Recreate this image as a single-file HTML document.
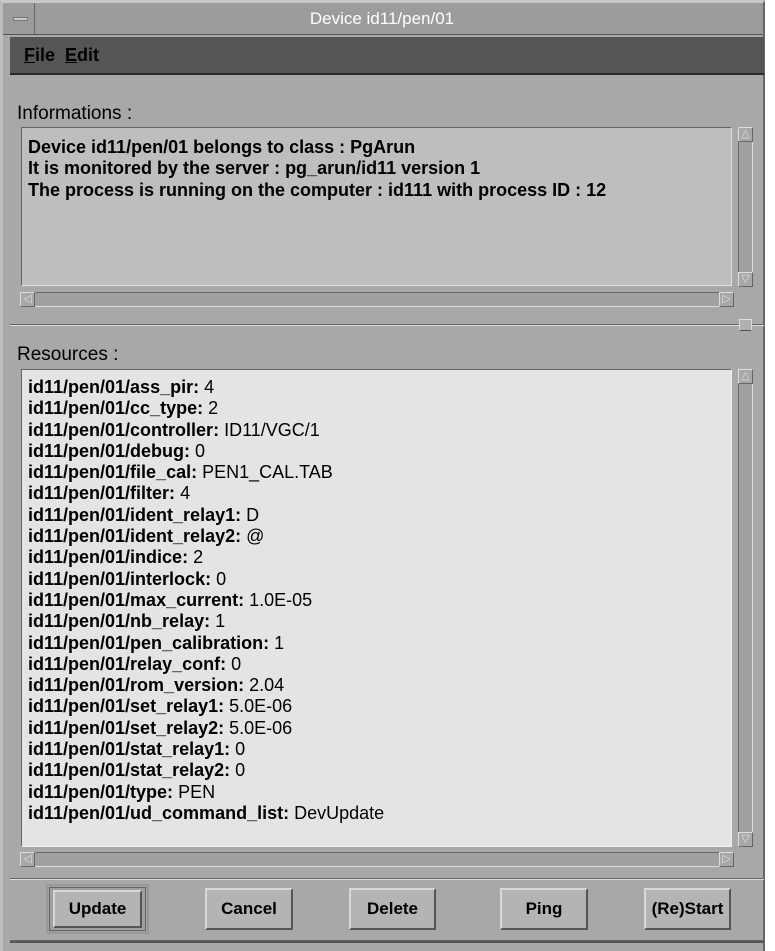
<!DOCTYPE html>
<html><head><style>
*{margin:0;padding:0;box-sizing:border-box}
body{width:775px;height:951px;background:#fff;position:relative;overflow:hidden;font-family:"Liberation Sans",sans-serif}
.a{position:absolute}
.t{font-size:18px;color:#000;white-space:pre;line-height:21.3px}
.btn{position:absolute;top:888px;height:42px;background:#b4b4b4;border-top:2px solid #d8d8d8;border-left:2px solid #d8d8d8;border-right:2px solid #555;border-bottom:2px solid #555;font-weight:bold;font-size:17px;text-align:center;line-height:38px}
.sb{background:#a0a0a0;border:1px solid #666;border-right-color:#ddd;border-bottom-color:#ddd}
.ar{position:absolute;background:#a8a8a8;border:1px solid #ddd;border-right-color:#666;border-bottom-color:#666;color:#ddd;font-size:11px;text-align:center;line-height:13px}
</style></head><body>
<div class="a" style="left:0;top:0;width:765px;height:951px;background:#a8a8a8;border-left:3px solid #bdbdbd;border-top:3px solid #c8c8c8;border-right:2px solid #666"></div>
<div class="a" style="left:3px;top:3px;width:760px;height:32px;background:#9c9c9c;border-bottom:1px solid #555"></div>
<div class="a" style="left:3px;top:3px;width:32px;height:32px;border-right:1px solid #666"></div>
<div class="a" style="left:13px;top:17px;width:15px;height:4px;background:#c8c8c8;border:1px solid #777"></div>
<div class="a" style="left:0;top:9px;width:764px;text-align:center;color:#fff;font-size:17px">Device id11/pen/01</div>
<div class="a" style="left:10px;top:37px;width:754px;height:38px;background:#555;border-bottom:2px solid #2a2a2a"></div>
<div class="a t" style="left:24px;top:45px;color:#000;font-weight:bold;font-size:18px"><u>F</u>ile  <u>E</u>dit</div>
<div class="a t" style="left:17px;top:103px;font-size:19px">Informations :</div>
<div class="a" style="left:21px;top:127px;width:711px;height:159px;background:#bebebe;border:1px solid #666;border-right-color:#e0e0e0;border-bottom-color:#e0e0e0"></div>
<div class="a t" style="left:28px;top:137px;font-weight:bold">Device id11/pen/01 belongs to class : PgArun
It is monitored by the server : pg_arun/id11 version 1
The process is running on the computer : id111 with process ID : 12</div>
<div class="a sb" style="left:738px;top:127px;width:15px;height:160px"></div>
<div class="ar" style="left:738px;top:127px;width:15px;height:15px">△</div>
<div class="ar" style="left:738px;top:272px;width:15px;height:15px">▽</div>
<div class="a sb" style="left:20px;top:292px;width:714px;height:15px"></div>
<div class="ar" style="left:20px;top:292px;width:15px;height:15px">◁</div>
<div class="ar" style="left:719px;top:292px;width:15px;height:15px">▷</div>
<div class="a" style="left:10px;top:324px;width:754px;height:2px;border-top:1px solid #666;border-bottom:1px solid #ddd"></div>
<div class="a" style="left:739px;top:319px;width:13px;height:12px;background:#b0b0b0;border:1px solid #ddd;border-bottom-color:#555"></div>
<div class="a t" style="left:17px;top:344px;font-size:19px">Resources :</div>
<div class="a" style="left:21px;top:369px;width:711px;height:478px;background:#e4e4e4;border:1px solid #666;border-right-color:#f0f0f0;border-bottom-color:#f0f0f0"></div>
<div class="a t" style="left:28px;top:377px"><b>id11/pen/01/ass_pir:</b> 4
<b>id11/pen/01/cc_type:</b> 2
<b>id11/pen/01/controller:</b> ID11/VGC/1
<b>id11/pen/01/debug:</b> 0
<b>id11/pen/01/file_cal:</b> PEN1_CAL.TAB
<b>id11/pen/01/filter:</b> 4
<b>id11/pen/01/ident_relay1:</b> D
<b>id11/pen/01/ident_relay2:</b> @
<b>id11/pen/01/indice:</b> 2
<b>id11/pen/01/interlock:</b> 0
<b>id11/pen/01/max_current:</b> 1.0E-05
<b>id11/pen/01/nb_relay:</b> 1
<b>id11/pen/01/pen_calibration:</b> 1
<b>id11/pen/01/relay_conf:</b> 0
<b>id11/pen/01/rom_version:</b> 2.04
<b>id11/pen/01/set_relay1:</b> 5.0E-06
<b>id11/pen/01/set_relay2:</b> 5.0E-06
<b>id11/pen/01/stat_relay1:</b> 0
<b>id11/pen/01/stat_relay2:</b> 0
<b>id11/pen/01/type:</b> PEN
<b>id11/pen/01/ud_command_list:</b> DevUpdate</div>
<div class="a sb" style="left:738px;top:369px;width:15px;height:478px"></div>
<div class="ar" style="left:738px;top:369px;width:15px;height:15px">△</div>
<div class="ar" style="left:738px;top:832px;width:15px;height:15px">▽</div>
<div class="a sb" style="left:20px;top:852px;width:714px;height:15px"></div>
<div class="ar" style="left:20px;top:852px;width:15px;height:15px">◁</div>
<div class="ar" style="left:719px;top:852px;width:15px;height:15px">▷</div>
<div class="a" style="left:10px;top:878px;width:754px;height:2px;border-top:1px solid #666;border-bottom:1px solid #ddd"></div>
<div class="a" style="left:46px;top:884px;width:103px;height:50px;border:2px solid #999;background:#a0a0a0;outline:1px solid #666;outline-offset:-4px"></div>
<div class="btn" style="left:53px;width:89px;top:890px;height:38px;line-height:34px">Update</div>
<div class="btn" style="left:205px;width:88px">Cancel</div>
<div class="btn" style="left:349px;width:87px">Delete</div>
<div class="btn" style="left:500px;width:88px">Ping</div>
<div class="btn" style="left:644px;width:87px">(Re)Start</div>
<div class="a" style="left:10px;top:940px;width:754px;height:3px;border-top:1px solid #666;border-bottom:2px solid #555"></div>
</body></html>
